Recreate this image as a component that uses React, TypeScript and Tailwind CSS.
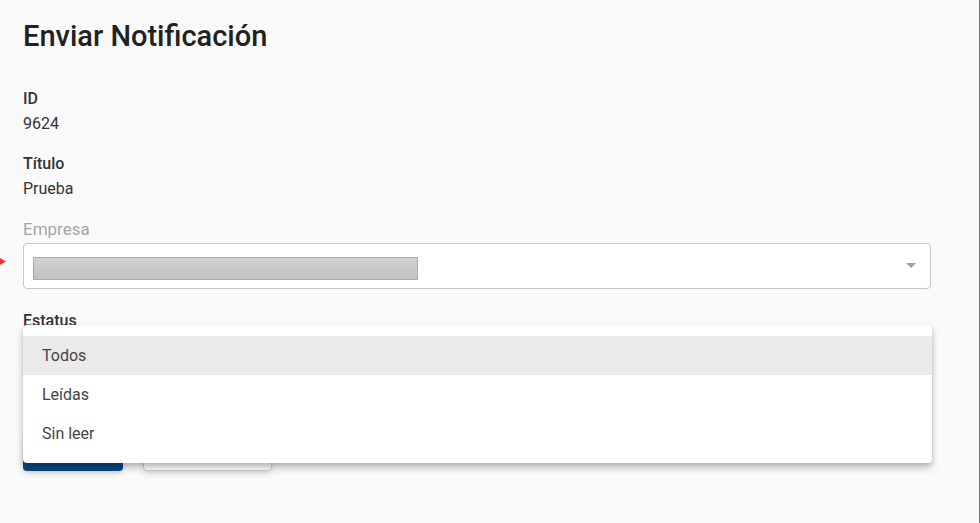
import React from 'react';

const App: React.FC = () => {
  const options = ['Todos', 'Leídas', 'Sin leer'];

  return (
    <div
      className="relative w-[980px] h-[523px] overflow-hidden bg-[#fafafa] border-r border-[#6e6e6e] text-[#222]"
      style={{ fontFamily: 'Roboto, "Liberation Sans", sans-serif' }}
    >
      {/* red pointer at left edge */}
      <svg className="absolute left-0 top-[257px]" width="8" height="9" viewBox="0 0 8 9">
        <path d="M0 1 L6 4.5 L0 8 Z" fill="#e53935" />
      </svg>

      <div className="pl-[23px] pr-[48px] pt-[19px]">
        {/* Heading */}
        <h1 className="text-[29px] leading-[34px] font-medium text-[#212121] mb-[33px]">
          Enviar Notificación
        </h1>

        {/* ID */}
        <div className="text-[16px] leading-[25px]">
          <p className="font-medium text-[#333]">ID</p>
          <p className="text-[#333]">9624</p>
        </div>

        {/* Title */}
        <div className="text-[16px] leading-[25px] mt-[15px]">
          <p className="font-medium text-[#333]">Título</p>
          <p className="text-[#333]">Prueba</p>
        </div>

        {/* Empresa */}
        <p className="text-[17px] leading-[20px] text-[#a6a6a6] mt-[18px] mb-[4px]">Empresa</p>
        <div className="h-[46px] bg-white border border-[#c8c8c8] rounded-[4px] flex items-center pl-[9px] pr-[14px] pt-[5px]">
          <div className="w-[385px] h-[23px] border border-[#a9a9a9] bg-gradient-to-b from-[#d2d2d2] to-[#c2c2c2]" />
          <div className="flex-1" />
          <svg className="-mt-[5px]" width="10" height="6" viewBox="0 0 10 6">
            <path d="M0 0 L10 0 L5 5 Z" fill="#9e9e9e" />
          </svg>
        </div>

        {/* Estatus */}
        <p className="font-medium text-[16px] leading-[20px] text-[#333] mt-[22px] mb-[4px]">Estatus</p>
        <div className="h-[46px] bg-white border border-[#c8c8c8] rounded-[4px]" />

        {/* Actions */}
        <div className="flex gap-[20px] mt-[52px]">
          <button className="w-[100px] h-[38px] rounded-[4px] bg-[#0b4a80] text-white text-[15px] font-medium shadow-md">
            Enviar
          </button>
          <button className="w-[129px] h-[38px] rounded-[4px] bg-white border border-[#cfcfcf] text-[#444] text-[15px] font-medium shadow-md">
            Cancelar
          </button>
        </div>
      </div>

      {/* Open dropdown menu */}
      <div className="absolute left-[23px] top-[325px] w-[909px] h-[138px] bg-white rounded-[4px] shadow-[0_5px_8px_rgba(0,0,0,0.22),0_2px_4px_rgba(0,0,0,0.12)] pt-[11px]">
        {options.map((opt, i) => (
          <div
            key={opt}
            className={
              'h-[39px] flex items-center pl-[19px] text-[16px] text-[#444] ' +
              (i === 0 ? 'bg-[#ebebeb]' : '')
            }
          >
            {opt}
          </div>
        ))}
      </div>
    </div>
  );
};

export default App;
